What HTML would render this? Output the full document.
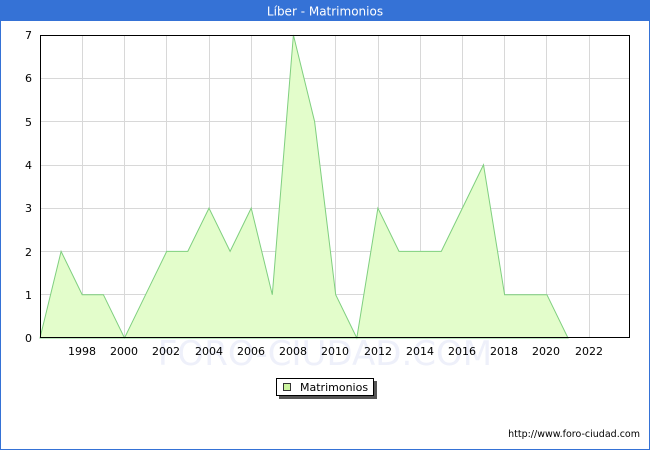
<!DOCTYPE html>
<html><head><style>
body{margin:0;width:650px;height:450px;overflow:hidden;font-family:"DejaVu Sans","Liberation Sans",sans-serif;}
</style></head><body>
<svg width="650" height="450" xmlns="http://www.w3.org/2000/svg" font-family="DejaVu Sans, Liberation Sans, sans-serif">
<rect x="0" y="0" width="650" height="450" fill="#fff"/>
<rect x="0.5" y="0.5" width="649" height="449" fill="none" stroke="#3572d6"/>
<rect x="0" y="0" width="650" height="21" fill="#3572d6"/>
<text x="325" y="15.5" text-anchor="middle" fill="#fff" font-size="12">Líber - Matrimonios</text>
<g stroke="#d8d8d8" stroke-width="1">
<line x1="82.5" y1="35" x2="82.5" y2="338"/><line x1="124.5" y1="35" x2="124.5" y2="338"/>
<line x1="166.5" y1="35" x2="166.5" y2="338"/><line x1="209.5" y1="35" x2="209.5" y2="338"/>
<line x1="251.5" y1="35" x2="251.5" y2="338"/><line x1="293.5" y1="35" x2="293.5" y2="338"/>
<line x1="335.5" y1="35" x2="335.5" y2="338"/><line x1="378.5" y1="35" x2="378.5" y2="338"/>
<line x1="420.5" y1="35" x2="420.5" y2="338"/><line x1="462.5" y1="35" x2="462.5" y2="338"/>
<line x1="504.5" y1="35" x2="504.5" y2="338"/><line x1="546.5" y1="35" x2="546.5" y2="338"/>
<line x1="589.5" y1="35" x2="589.5" y2="338"/>
<line x1="40" y1="294.5" x2="630" y2="294.5"/><line x1="40" y1="251.5" x2="630" y2="251.5"/>
<line x1="40" y1="208.5" x2="630" y2="208.5"/><line x1="40" y1="165.5" x2="630" y2="165.5"/>
<line x1="40" y1="121.5" x2="630" y2="121.5"/><line x1="40" y1="78.5" x2="630" y2="78.5"/>
</g>
<text x="325" y="365" text-anchor="middle" font-size="34" fill="#eef0fa">FORO-CIUDAD.COM</text>
<polygon fill="#e3fdcb" stroke="#7fcf7f" stroke-width="1" points="40,338 61.1,251.4 82.2,294.7 103.4,294.7 124.5,338 145.6,294.7 166.7,251.4 187.8,251.4 209,208.1 230.1,251.4 251.2,208.1 272.3,294.7 293.4,35 314.6,121.5 335.7,294.7 356.8,338 377.9,208.1 399,251.4 420.2,251.4 441.3,251.4 462.4,208.1 483.5,164.8 504.6,294.7 525.8,294.7 546.9,294.7 568,338"/>
<rect x="40.5" y="35.5" width="589" height="302" fill="none" stroke="#000"/>
<g font-size="11" fill="#000" text-anchor="end">
<text x="32" y="342">0</text><text x="32" y="299">1</text><text x="32" y="256">2</text>
<text x="32" y="212">3</text><text x="32" y="169">4</text><text x="32" y="126">5</text>
<text x="32" y="82">6</text><text x="32" y="39">7</text>
</g>
<g font-size="11" fill="#000" text-anchor="middle">
<text x="82" y="355">1998</text><text x="124" y="355">2000</text><text x="166" y="355">2002</text>
<text x="209" y="355">2004</text><text x="251" y="355">2006</text><text x="293" y="355">2008</text>
<text x="335" y="355">2010</text><text x="378" y="355">2012</text><text x="420" y="355">2014</text>
<text x="462" y="355">2016</text><text x="504" y="355">2018</text><text x="546" y="355">2020</text>
<text x="589" y="355">2022</text>
</g>
<rect x="279" y="381" width="98" height="18" fill="#555"/>
<rect x="276.5" y="378.5" width="97" height="17" fill="#fff" stroke="#000"/>
<rect x="283.5" y="383.5" width="7" height="7" fill="#ccf5a0" stroke="#333"/>
<text x="300" y="391" font-size="11">Matrimonios</text>
<text x="640" y="437" text-anchor="end" font-size="9.5">http://www.foro-ciudad.com</text>
</svg>
</body></html>
